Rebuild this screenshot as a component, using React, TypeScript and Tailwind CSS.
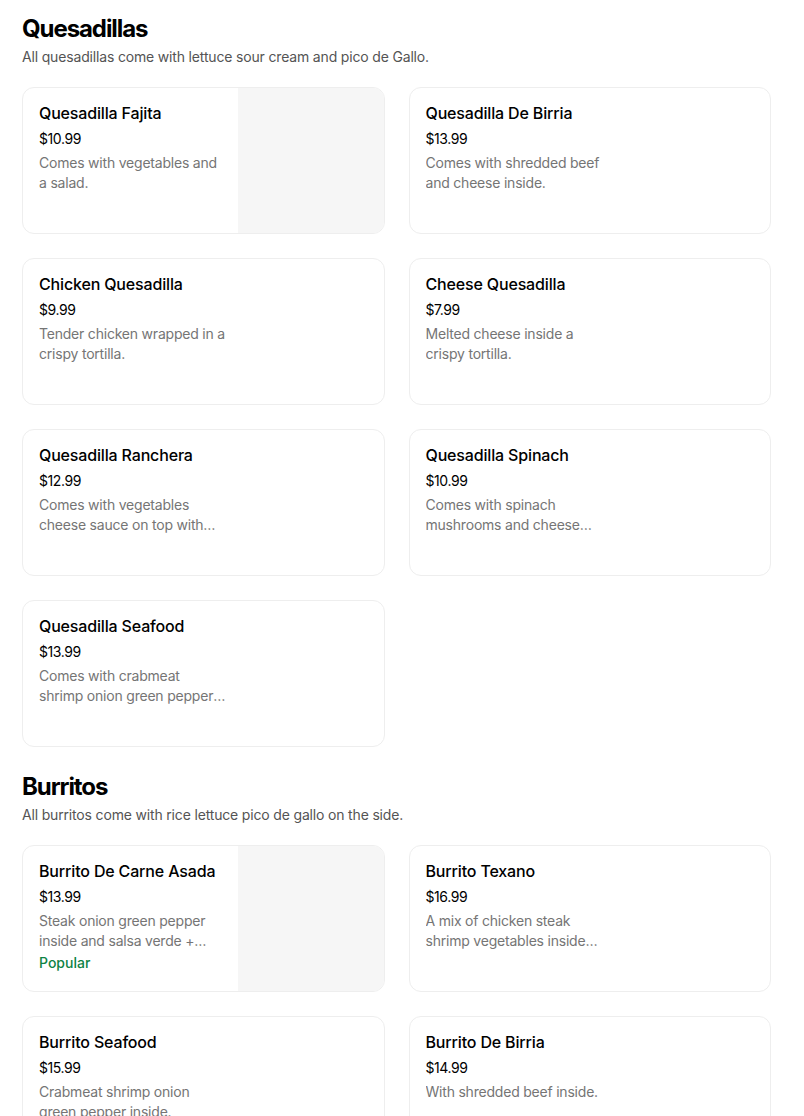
import React from 'react';

type Item = {
  name: string;
  price: string;
  desc: string;
  image?: boolean;
  popular?: boolean;
};

const quesadillas: Item[] = [
  { name: 'Quesadilla Fajita', price: '$10.99', desc: 'Comes with vegetables and a salad.', image: true },
  { name: 'Quesadilla De Birria', price: '$13.99', desc: 'Comes with shredded beef and cheese inside.' },
  { name: 'Chicken Quesadilla', price: '$9.99', desc: 'Tender chicken wrapped in a crispy tortilla.' },
  { name: 'Cheese Quesadilla', price: '$7.99', desc: 'Melted cheese inside a crispy tortilla.' },
  { name: 'Quesadilla Ranchera', price: '$12.99', desc: 'Comes with vegetables cheese sauce on top with rice and beans.' },
  { name: 'Quesadilla Spinach', price: '$10.99', desc: 'Comes with spinach mushrooms and cheese inside.' },
  { name: 'Quesadilla Seafood', price: '$13.99', desc: 'Comes with crabmeat shrimp onion green pepper inside.' },
];

const burritos: Item[] = [
  { name: 'Burrito De Carne Asada', price: '$13.99', desc: 'Steak onion green pepper inside and salsa verde + cheese on top.', image: true, popular: true },
  { name: 'Burrito Texano', price: '$16.99', desc: 'A mix of chicken steak shrimp vegetables inside with cheese.' },
  { name: 'Burrito Seafood', price: '$15.99', desc: 'Crabmeat shrimp onion green pepper inside.' },
  { name: 'Burrito De Birria', price: '$14.99', desc: 'With shredded beef inside.' },
];

function MenuCard({ item }: { item: Item }) {
  return (
    <div className="flex h-[147px] overflow-hidden rounded-xl border border-[#eeeeee] bg-white">
      <div className="flex min-w-0 flex-1 flex-col pl-4 pr-3 pt-[13px]">
        <div className="text-[16px] font-medium leading-6 tracking-[-0.01em] text-black">{item.name}</div>
        <div className="mt-[4px] text-[14px] leading-5 tracking-[-0.03em] text-black">{item.price}</div>
        <div className="mt-1 line-clamp-2 w-[188px] text-[14px] leading-5 tracking-[-0.015em] text-[#757575]">
          {item.desc}
        </div>
        {item.popular && (
          <div className="mt-[2px] text-[14px] font-medium leading-5 text-[#0e8345]">Popular</div>
        )}
      </div>
      {item.image && <div className="h-full w-[146px] shrink-0 bg-[#f6f6f6]" />}
    </div>
  );
}

function Section({ title, subtitle, items }: { title: string; subtitle: string; items: Item[] }) {
  return (
    <section>
      <h2 className="text-[24px] font-bold leading-8 tracking-[-0.045em] text-black">{title}</h2>
      <p className="mt-[2px] text-[14px] leading-5 tracking-[-0.012em] text-[#545454]">{subtitle}</p>
      <div className="mt-5 grid grid-cols-2 gap-6">
        {items.map((item) => (
          <MenuCard key={item.name} item={item} />
        ))}
      </div>
    </section>
  );
}

export default function App() {
  return (
    <div className="min-h-screen bg-white" style={{ fontFamily: 'Inter, "Noto Sans", sans-serif' }}>
      <div className="flex w-[771px] flex-col gap-6 pl-[22px] pt-[13px]">
        <Section
          title="Quesadillas"
          subtitle="All quesadillas come with lettuce sour cream and pico de Gallo."
          items={quesadillas}
        />
        <Section
          title="Burritos"
          subtitle="All burritos come with rice lettuce pico de gallo on the side."
          items={burritos}
        />
      </div>
    </div>
  );
}
